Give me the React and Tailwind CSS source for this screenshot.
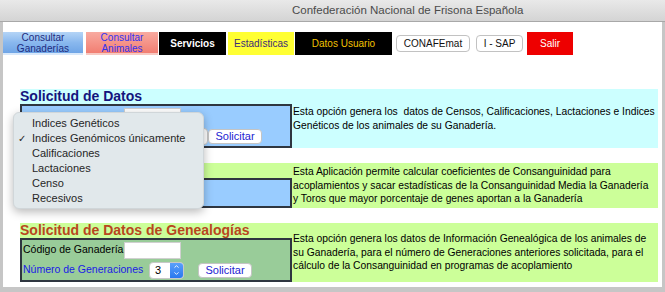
import { ChevronUp, ChevronDown } from 'lucide-react';

const MENU_ITEMS = [
  'Indices Genéticos',
  'Indices Genómicos únicamente',
  'Calificaciones',
  'Lactaciones',
  'Censo',
  'Recesivos',
];

function SolicitarButton() {
  return (
    <div className="h-[15px] w-[54px] rounded-[4px] bg-white border border-[#c4c4c4] flex items-center justify-center text-[11px] text-[#2323d2] leading-none">
      Solicitar
    </div>
  );
}

function CodigoRow({ label }) {
  return (
    <div className="h-[20px] flex items-center pl-[1px]">
      <span className="w-[101px] text-[10.5px] text-black">{label}</span>
      <div className="h-[17px] w-[57px] bg-white border border-[#d0d0d0]" />
    </div>
  );
}

function Section({ bg, title, titleColor, box, boxBg, boxH, textPad = '', children }) {
  return (
    <div className={`flex ${bg}`}>
      <div className="w-[272px] flex flex-col shrink-0">
        <div className={`h-[15px] text-[14px] font-bold leading-[15px] whitespace-nowrap ${titleColor}`}>{title}</div>
        <div className={`${boxH} ${boxBg} border-2 border-[#2f3640] flex flex-col`}>{box}</div>
      </div>
      <div className={`flex-1 flex items-center pl-px text-[10.3px] leading-[13.4px] text-black ${textPad}`}>
        <p>{children}</p>
      </div>
    </div>
  );
}

export default function App() {
  return (
    <div className="w-[665px] h-[292px] relative bg-[#c6c6c6] flex flex-col overflow-hidden font-['Liberation_Sans',Arial,sans-serif]">
      {/* Window title bar */}
      <div className="h-[22px] shrink-0 bg-gradient-to-b from-[#e9e9e9] to-[#d4d4d4] border-b border-[#a8a8a8] pl-[292px] text-[11.5px] leading-[21px] text-[#4b4b4b]">
        Confederación Nacional de Frisona Española
      </div>

      <div className="flex-1 ml-[3px] mr-[3px] mb-[5px] bg-white flex flex-col">
        {/* Nav */}
        <div className="mt-[10px] flex items-center h-[23px] text-[10px] leading-[11px]">
          <div className="w-[80px] h-[23px] bg-gradient-to-b from-[#b4d4f6] via-[#89b8ee] to-[#6fa5e6] border-b-2 border-[#d8e8fa] flex flex-col items-center justify-center text-[#1d2b80]">
            <span>Consultar</span>
            <span>Ganaderías</span>
          </div>
          <div className="ml-[3px] w-[72px] h-[23px] bg-gradient-to-b from-[#f8aaa0] to-[#f17e72] border-b-2 border-[#f7c9c2] flex flex-col items-center justify-center text-[#3232f0]">
            <span>Consultar</span>
            <span>Animales</span>
          </div>
          <div className="ml-px w-[67px] h-[23px] bg-black flex items-center justify-center text-white font-bold">Servicios</div>
          <div className="ml-[2px] w-[66px] h-[23px] bg-[#ffff33] flex items-center justify-center text-[#3b2c79]">Estadísticas</div>
          <div className="ml-px w-[97px] h-[23px] bg-black flex items-center justify-center text-[#f2c200]">Datos Usuario</div>
          <div className="ml-[4px] w-[74px] h-[17px] bg-white border border-[#c2c2c2] rounded-[4px] flex items-center justify-center text-[#111]">CONAFEmat</div>
          <div className="ml-[6px] w-[47px] h-[17px] bg-white border border-[#c2c2c2] rounded-[4px] flex items-center justify-center text-[#111]">I - SAP</div>
          <div className="ml-[4px] w-[46px] h-[23px] bg-[#ee0000] flex items-center justify-center text-white">Salir</div>
        </div>

        {/* Sections */}
        <div className="ml-[17px] mr-[4px] mt-[34px] flex flex-col gap-[15px]">
          <Section
            bg="bg-[#ccffff]"
            title="Solicitud de Datos"
            titleColor="text-[#14147d]"
            boxBg="bg-[#99ccff]"
            boxH="h-[44px]"
            box={
              <>
                <CodigoRow label="" />
                <div className="h-[20px] flex items-center pl-[1px]">
                  <div className="w-[185px] h-[17px] bg-white border border-[#c4c4c4] rounded-[4px]" />
                  <SolicitarButton />
                </div>
              </>
            }
          >
            Esta opción genera los&nbsp; datos de Censos, Calificaciones, Lactaciones e Indices Genéticos de los animales de su Ganadería.
          </Section>

          <Section
            bg="bg-[#ccff99]"
            title=""
            titleColor="text-[#14147d]"
            boxBg="bg-[#99ccff]"
            boxH="h-[30px]"
            box={null}
            textPad="pr-[6px]"
          >
            Esta Aplicación permite calcular coeficientes de Consanguinidad para acoplamientos y sacar estadísticas de la Consanguinidad Media la Ganadería y Toros que mayor porcentaje de genes aportan a la Ganadería
          </Section>

          <Section
            bg="bg-[#ccff99]"
            title="Solicitud de Datos de Genealogías"
            titleColor="text-[#b8471e]"
            boxBg="bg-[#99cc99]"
            boxH="h-[44px]"
            box={
              <>
                <CodigoRow label="Código de Ganadería" />
                <div className="h-[20px] flex items-center pl-[1px]">
                  <span className="w-[126px] text-[10.5px] text-[#1a1ae6]">Número de Generaciones</span>
                  <div className="w-[35px] h-[17px] rounded-[4px] bg-white border border-[#c8c8c8] flex overflow-hidden">
                    <span className="flex-1 text-[11px] leading-[15px] pl-[5px] text-black">3</span>
                    <span className="w-[13px] bg-gradient-to-b from-[#5aa0fb] to-[#2a78ee] flex flex-col items-center justify-center text-white">
                      <ChevronUp size={7} strokeWidth={3} />
                      <ChevronDown size={7} strokeWidth={3} />
                    </span>
                  </div>
                  <div className="ml-[14px]"><SolicitarButton /></div>
                </div>
              </>
            }
          >
            Esta opción genera los datos de Información Genealógica de los animales de su Ganadería, para el número de Generaciones anteriores solicitada, para el cálculo de la Consanguinidad en programas de acoplamiento
          </Section>
        </div>
      </div>

      {/* Open popup menu of the select */}
      <div className="absolute left-[13px] top-[112px] w-[191px] h-[97px] rounded-[6px] bg-[#e1e8eb] border border-[#d0d6d9] shadow-[0_3px_10px_rgba(0,0,0,0.28)] pt-[3px] text-[11px] text-[#262626]">
        {MENU_ITEMS.map((item, i) => (
          <div key={item} className="h-[15px] leading-[15px] flex">
            <span className="w-[18px] pl-[4px] text-[10px]">{i === 1 ? '✓' : ''}</span>
            <span>{item}</span>
          </div>
        ))}
      </div>
    </div>
  );
}
